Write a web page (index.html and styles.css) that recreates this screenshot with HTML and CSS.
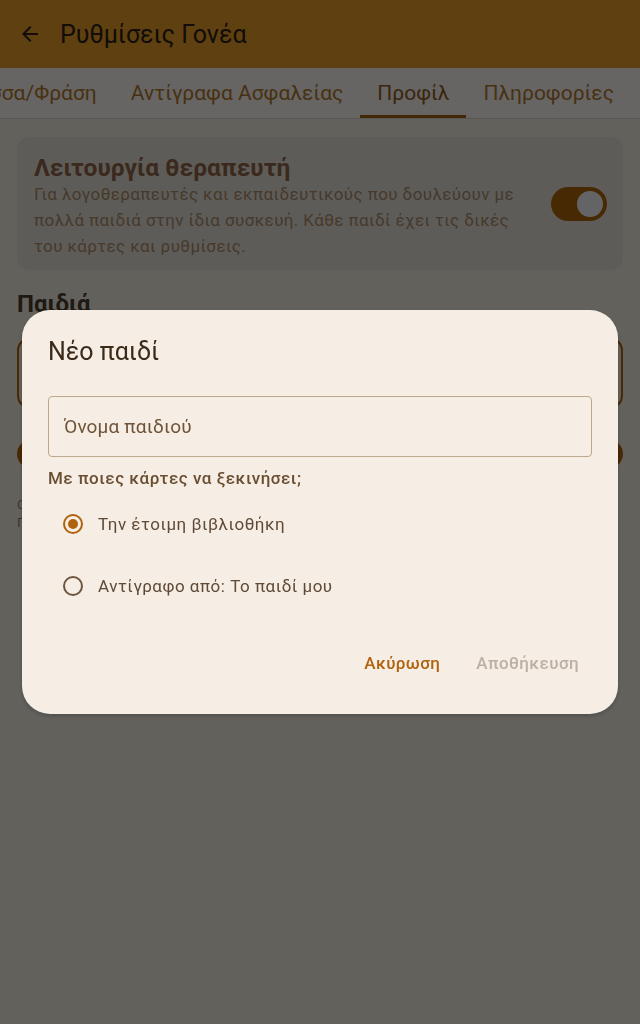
FILE: index.html
```html
<!DOCTYPE html>
<html lang="el">
<head>
  <meta charset="UTF-8" />
  <meta name="viewport" content="width=device-width, initial-scale=1" />
  <title>Ρυθμίσεις Γονέα</title>
  <link rel="stylesheet" href="styles.css">
</head>
<body>
  <header class="app-bar">
    <button class="back-btn" aria-label="Πίσω">
      <svg viewBox="0 0 24 24" width="24" height="24"><path d="M20 11H7.83l5.59-5.59L12 4l-8 8 8 8 1.41-1.41L7.83 13H20v-2z" fill="currentColor"/></svg>
    </button>
    <h1>Ρυθμίσεις Γονέα</h1>
  </header>

  <nav class="tabs">
    <div class="tab">Γλώσσα/Φράση</div>
    <div class="tab">Αντίγραφα Ασφαλείας</div>
    <div class="tab active">Προφίλ</div>
    <div class="tab">Πληροφορίες</div>
  </nav>

  <main class="content">
    <section class="card therapist">
      <div class="card-text">
        <h2>Λειτουργία θεραπευτή</h2>
        <p>Για λογοθεραπευτές και εκπαιδευτικούς που δουλεύουν με πολλά παιδιά στην ίδια συσκευή. Κάθε παιδί έχει τις δικές του κάρτες και ρυθμίσεις.</p>
      </div>
      <div class="switch on"><span class="thumb"></span></div>
    </section>

    <h2 class="section-title">Παιδιά</h2>
    <div class="child-item">Το παιδί μου</div>
    <button class="add-child">Προσθήκη παιδιού</button>
    <p class="hint">Οι κάρτες και οι ρυθμίσεις αποθηκεύονται χωριστά για κάθε παιδί.<br>Πατήστε ένα παιδί για να το κάνετε ενεργό.</p>
  </main>

  <div class="scrim">
    <div class="dialog">
      <h3>Νέο παιδί</h3>
      <div class="field">Όνομα παιδιού</div>
      <div class="group-label">Με ποιες κάρτες να ξεκινήσει;</div>
      <label class="radio-row">
        <span class="radio checked"></span>
        <span>Την έτοιμη βιβλιοθήκη</span>
      </label>
      <label class="radio-row">
        <span class="radio"></span>
        <span>Αντίγραφο από: Το παιδί μου</span>
      </label>
      <div class="actions">
        <button class="text-btn">Ακύρωση</button>
        <button class="text-btn disabled">Αποθήκευση</button>
      </div>
    </div>
  </div>
</body>
</html>
```

FILE: styles.css
```css
* {
  box-sizing: border-box;
  font-family: Roboto, 'Noto Sans', sans-serif;
}

body {
  margin: 0;
  padding: 0;
  background: #f7f2e7;
  height: 1024px;
  overflow: hidden;
}

.app-bar {
  height: 68px;
  background: #eda028;
  display: flex;
  align-items: center;
  color: #2e2214;
}

.back-btn {
  background: none;
  border: none;
  padding: 0;
  margin-left: 18px;
  width: 24px;
  height: 24px;
  color: #2e2214;
  display: flex;
}

.app-bar h1 {
  margin: 0 0 0 18px;
  font-size: 25px;
  font-weight: 400;
}

.tabs {
  height: 51px;
  background: #fffdfa;
  border-bottom: 1px solid #ddd6cc;
  display: flex;
  justify-content: flex-end;
  padding-right: 9px;
  overflow: hidden;
}

.tab {
  flex-shrink: 0;
  padding: 3px 17px 0;
  display: flex;
  align-items: center;
  font-size: 21px;
  font-weight: 400;
  color: #b57a2e;
  border-bottom: 3px solid transparent;
}

.tab.active {
  color: #94601c;
  border-bottom-color: #a8640e;
}

.content {
  padding: 18px 17px;
}

.card {
  background: #ece7dc;
  border-radius: 12px;
  padding: 18px 16px 11px 17px;
  display: flex;
  align-items: center;
  gap: 31px;
}

.card-text {
  flex: 1;
}

.card h2 {
  margin: 0;
  font-size: 24.5px;
  line-height: 26px;
  font-weight: 700;
  color: #93684a;
}

.card p {
  margin: 0;
  font-size: 17px;
  line-height: 26px;
  letter-spacing: 0.4px;
  color: #b0906e;
}

.switch {
  flex-shrink: 0;
  width: 56px;
  height: 34px;
  margin-bottom: 6px;
  border-radius: 17px;
  background: #b2680c;
  display: flex;
  align-items: center;
  justify-content: flex-end;
  padding: 0 4px;
}

.switch .thumb {
  width: 26px;
  height: 26px;
  border-radius: 50%;
  background: #fbfbff;
}

.section-title {
  margin: 20px 0 0;
  font-size: 24px;
  line-height: 28px;
  font-weight: 700;
  color: #4e3f30;
}

.child-item {
  margin-top: 20px;
  height: 70px;
  border: 2px solid #b2680c;
  border-radius: 12px;
  padding: 0 20px;
  display: flex;
  align-items: center;
  font-size: 18px;
  color: #4e3f30;
}

.add-child {
  margin-top: 32px;
  width: 100%;
  height: 28px;
  border: none;
  border-radius: 14px;
  background: #b2680c;
  color: #fff;
  font-size: 15px;
}

.hint {
  margin: 28px 0 0;
  font-size: 13px;
  line-height: 18px;
  color: #8a8078;
}

.scrim {
  position: fixed;
  inset: 0;
  background: rgba(0, 0, 0, 0.6);
  display: flex;
  align-items: center;
  justify-content: center;
}

.dialog {
  width: 596px;
  background: #f6ede4;
  border-radius: 28px;
  padding: 26px 26px 31px;
  box-shadow: 0 2px 4px rgba(0, 0, 0, 0.2);
}

.dialog h3 {
  margin: 0;
  font-size: 25px;
  line-height: 32px;
  font-weight: 400;
  color: #3a2a1a;
}

.field {
  margin-top: 28px;
  height: 61px;
  border: 1.5px solid #bfa98c;
  border-radius: 4px;
  padding: 0 15px;
  display: flex;
  align-items: center;
  font-size: 19px;
  letter-spacing: 0.15px;
  color: #6e5438;
}

.group-label {
  margin-top: 10px;
  line-height: 22px;
  font-size: 17px;
  font-weight: 500;
  letter-spacing: 0.5px;
  color: #6a4e32;
}

.radio-row {
  height: 62px;
  display: flex;
  align-items: center;
  gap: 15px;
  padding-left: 15px;
  font-size: 17px;
  letter-spacing: 0.5px;
  color: #5e4a36;
}

.radio-row:first-of-type {
  margin-top: 4px;
}

.radio {
  width: 20px;
  height: 20px;
  border: 2px solid #6e563e;
  border-radius: 50%;
  display: flex;
  align-items: center;
  justify-content: center;
}

.radio.checked {
  border-color: #b0620e;
}

.radio.checked::after {
  content: '';
  width: 10px;
  height: 10px;
  border-radius: 50%;
  background: #b0620e;
}

.actions {
  margin-top: 26px;
  height: 40px;
  display: flex;
  justify-content: flex-end;
  gap: 10px;
}

.text-btn {
  background: none;
  border: none;
  padding: 0 13px;
  font-size: 17px;
  font-weight: 500;
  letter-spacing: 0.4px;
  color: #b0620e;
}

.text-btn.disabled {
  color: #bab0a6;
}
```
